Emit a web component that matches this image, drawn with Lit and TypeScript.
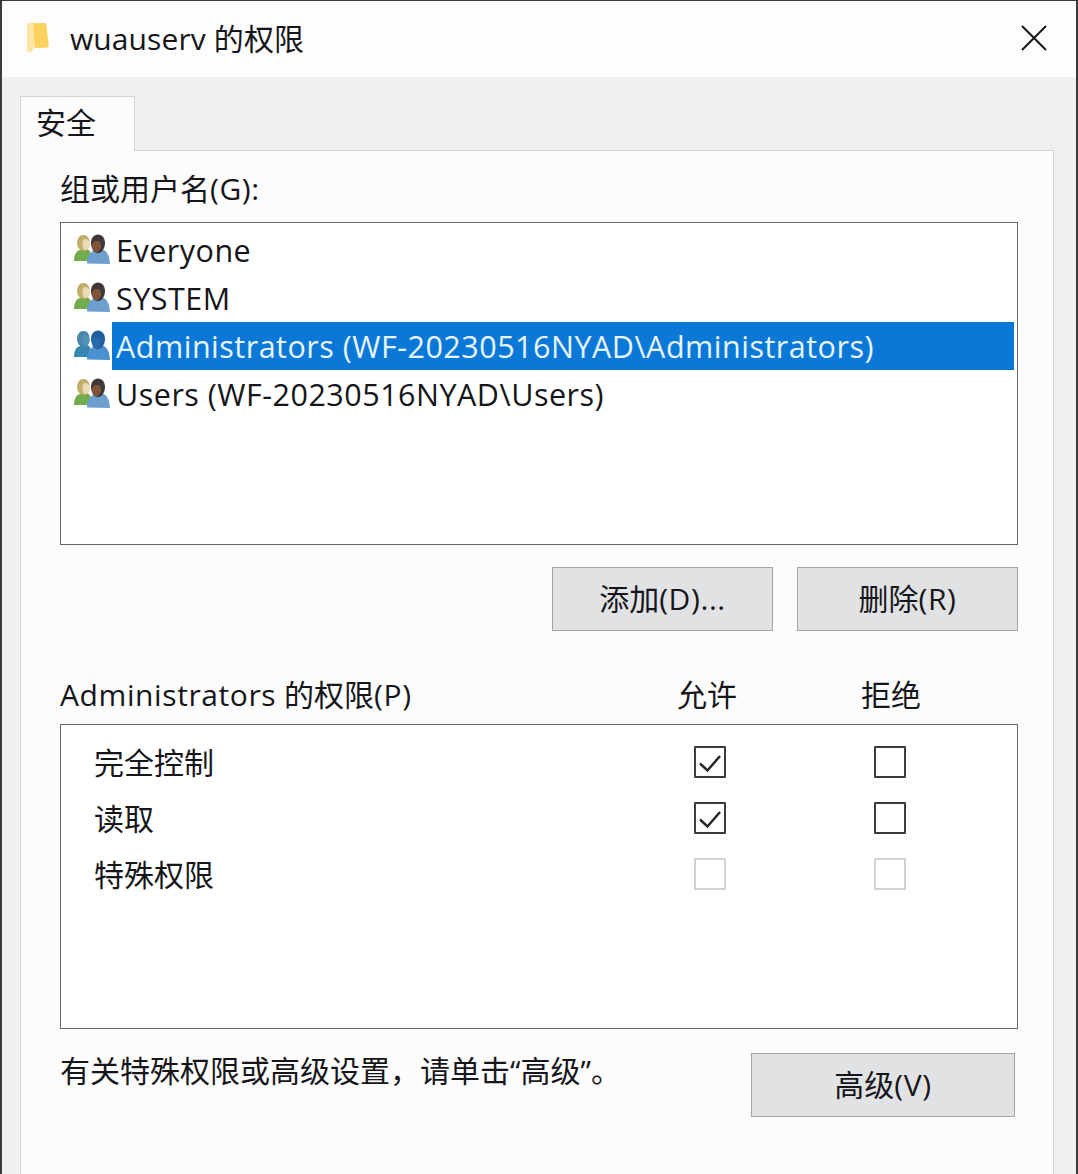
import { LitElement, html, css, svg } from "lit";
import { customElement } from "lit/decorators.js";

const people = (selected: boolean) => {
  const c = selected
    ? { hairL: "#4a86ad", faceL: "#4f93bb", bodyL: "#3688b2", hairR: "#1d5f9e", faceR: "#2769ab", bodyR: "#4b91d2" }
    : { hairL: "#c4ae6e", faceL: "#ead9b2", bodyL: "#75ab4f", hairR: "#3d3835", faceR: "#805438", bodyR: "#6f9fcf" };
  return html`<svg class="people" viewBox="0 0 36 32" width="36" height="32">
    ${svg`
      <path d="M0 27c0-6 2-10 6-11l7-1c3 1 4 4 4 7l-1 5z" fill=${c.bodyL} />
      <path d="M9.500 1c-4 0-6.500 3.500-6.500 8 0 4 2.500 8 6.500 8s6-3.500 6-8c0-5-2-8-6-8z" fill=${c.hairL} />
      <path d="M11 5c3 0 4.500 2 4.500 5 0 3-1.500 6-4 6-2 0-3-2-3-5 0-3 .5-6 2.500-6z" fill=${c.faceL} />
      <path d="M13 29.500c0-5 1-8 4-11l3-3h8c5 1 7.500 6 8 14.500z" fill=${c.bodyR} />
      <path d="M24 .500c-4 0-7 3.500-7 8.500 0 5 3 10 7 10s7-5 7-10c0-5-3-8.500-7-8.500z" fill=${c.hairR} />
      <path d="M22 7c3 0 5 1 5 5 0 3-2 6-4.500 6-2.500 0-4.500-3-4.500-6 0-3 2-5 4-5z" fill=${c.faceR} />
    `}
  </svg>`;
};

@customElement("app-root")
export class AppRoot extends LitElement {
  static styles = css`
    :host {
      display: block;
      width: 1078px;
      height: 1174px;
      overflow: hidden;
      background: #3a3a3c;
      font-family: "Open Sans", "Noto Sans CJK SC", sans-serif;
      font-size: 30px;
      color: #16161a;
    }
    .window {
      margin: 1px 2px 0 2px;
      height: 1173px;
      background: #eff0f2;
      overflow: hidden;
    }
    .titlebar {
      height: 76px;
      background: #fdfdfe;
      display: flex;
      align-items: center;
      padding: 0 29px 2px 24px;
      box-sizing: border-box;
    }
    .title {
      margin-left: 20px;
      flex: 1;
      letter-spacing: 0.1px;
      padding-bottom: 3px;
    }
    .tab {
      margin: 19px 0 0 18px;
      width: 115px;
      height: 55px;
      box-sizing: border-box;
      background: #fcfcfd;
      border: 1px solid #d2d3d6;
      border-bottom: none;
      padding-left: 15px;
      line-height: 52px;
      position: relative;
      z-index: 1;
    }
    .panel {
      margin: -1px 22px 0 18px;
      height: 1040px;
      background: #fcfcfd;
      border: 1px solid #d2d3d6;
      padding: 20px 35px 0 39px;
      box-sizing: border-box;
    }
    .label {
      line-height: 36px;
    }
    .lat {
      letter-spacing: 0.6px;
    }
    .list {
      margin-top: 15px;
      height: 323px;
      box-sizing: border-box;
      border: 1px solid #63666c;
      background: #fff;
      padding: 3px 3px 0 13px;
    }
    .row {
      height: 48px;
      display: flex;
      align-items: center;
    }
    .people {
      flex: none;
    }
    .name {
      flex: 1;
      margin-left: 2px;
      padding-left: 4px;
      line-height: 48px;
      font-size: 30.5px;
      letter-spacing: 0.5px;
      white-space: nowrap;
    }
    .row.selected .name {
      background: #0a78d7;
      color: #e8f4ff;
    }
    .actions {
      margin-top: 22px;
      display: flex;
      justify-content: flex-end;
      gap: 24px;
    }
    .btn {
      width: 221px;
      height: 64px;
      box-sizing: border-box;
      background: #e1e2e4;
      border: 1px solid #a3a4a7;
      display: flex;
      align-items: center;
      justify-content: center;
      padding-bottom: 5px;
    }
    .perm-head {
      margin-top: 46px;
      height: 36px;
      line-height: 36px;
      display: grid;
      grid-template-columns: 617px 60px 124px 60px;
      white-space: nowrap;
    }
    .perm-head .deny {
      grid-column: 4;
    }
    .perm-head .allow {
      grid-column: 2;
    }
    .perms {
      margin-top: 11px;
      height: 305px;
      box-sizing: border-box;
      border: 1px solid #63666c;
      background: #fff;
      padding-top: 9px;
    }
    .perm {
      height: 56px;
      display: grid;
      grid-template-columns: 600px 32px 148px 32px;
      align-items: center;
      padding-left: 33px;
    }
    .perm span {
      padding-bottom: 2px;
    }
    .box {
      width: 32px;
      height: 32px;
      box-sizing: border-box;
      border: 2px solid #3b3c40;
      border-radius: 1px;
      background: #fff;
    }
    .box.off {
      border-color: #d0d1d3;
    }
    .box svg {
      display: block;
    }
    .perm .box.deny {
      grid-column: 4;
    }
    .footer {
      margin-top: 24px;
      display: flex;
      justify-content: space-between;
      margin-right: 3px;
    }
    .hint {
      line-height: 36px;
    }
    .btn.wide {
      width: 264px;
    }
  `;

  private box(state: "on" | "empty" | "off", deny = false) {
    return html`<div class="box ${state === "off" ? "off" : ""} ${deny ? "deny" : ""}">
      ${state === "on"
        ? html`<svg viewBox="0 0 28 28" width="28" height="28">
            ${svg`<path d="M4 15.500l7.500 7L24 8" fill="none" stroke="#26272b" stroke-width="2.500" />`}
          </svg>`
        : ""}
    </div>`;
  }

  render() {
    const users = [
      "Everyone",
      "SYSTEM",
      "Administrators (WF-20230516NYAD\\Administrators)",
      "Users (WF-20230516NYAD\\Users)",
    ];
    return html`<div class="window">
      <div class="titlebar">
        <svg viewBox="0 0 24 34" width="24" height="34">
          ${svg`
            <path d="M1 2h19l2 24-2 1H8l-3 4-4-1z" fill="#f8d878" />
            <path d="M7 2h13l3 24H9z" fill="#fbd25e" />
            <path d="M1 2h6l2 24-4 6-4-2z" fill="#fbe6a5" />
          `}
        </svg>
        <span class="title">wuauserv 的权限</span>
        <svg viewBox="0 0 26 26" width="26" height="26">
          ${svg`<path d="M1 1l24 24M25 1L1 25" stroke="#16161a" stroke-width="2" fill="none" />`}
        </svg>
      </div>
      <div class="tab">安全</div>
      <div class="panel">
        <div class="label">组或用户名<span class="lat">(G):</span></div>
        <div class="list">
          ${users.map(
            (u, i) => html`<div class="row ${i === 2 ? "selected" : ""}">
              ${people(i === 2)}
              <span class="name">${u}</span>
            </div>`
          )}
        </div>
        <div class="actions">
          <div class="btn"><span>添加<span class="lat">(D)...</span></span></div>
          <div class="btn"><span>删除<span class="lat">(R)</span></span></div>
        </div>
        <div class="perm-head">
          <span><span class="lat">Administrators</span> 的权限<span class="lat">(P)</span></span>
          <span class="allow">允许</span>
          <span class="deny">拒绝</span>
        </div>
        <div class="perms">
          <div class="perm"><span>完全控制</span>${this.box("on")}${this.box("empty", true)}</div>
          <div class="perm"><span>读取</span>${this.box("on")}${this.box("empty", true)}</div>
          <div class="perm"><span>特殊权限</span>${this.box("off")}${this.box("off", true)}</div>
        </div>
        <div class="footer">
          <span class="hint">有关特殊权限或高级设置，请单击“高级”。</span>
          <div class="btn wide"><span>高级<span class="lat">(V)</span></span></div>
        </div>
      </div>
    </div>`;
  }
}
